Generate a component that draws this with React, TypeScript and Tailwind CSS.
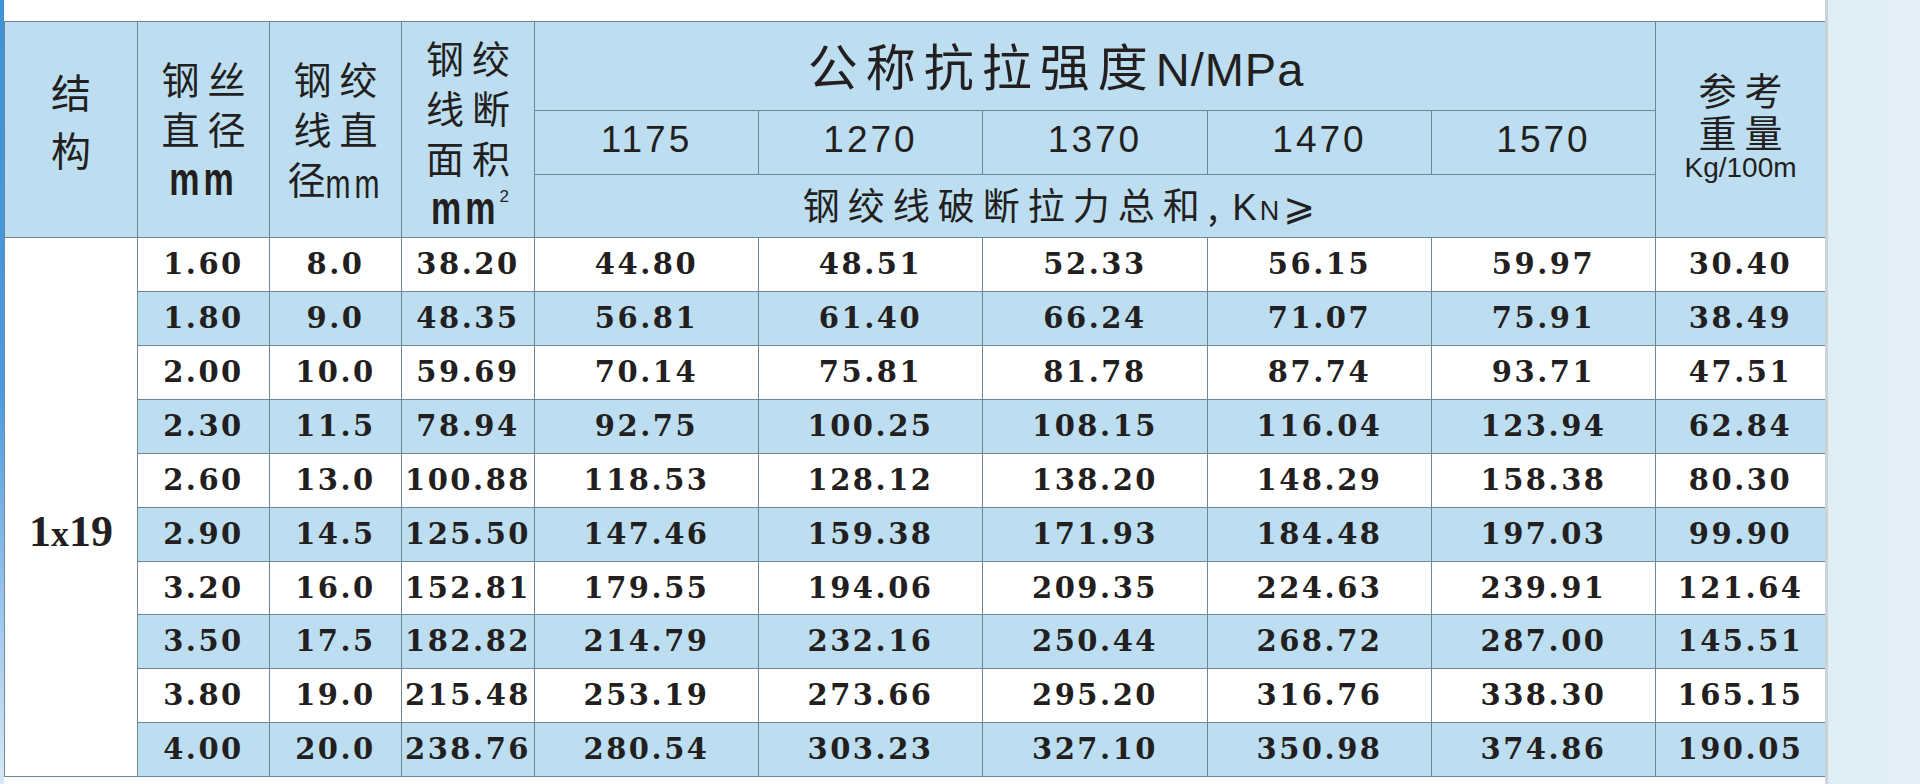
import React from "react";

const rows: string[][] = [
  ["1.60", "8.0", "38.20", "44.80", "48.51", "52.33", "56.15", "59.97", "30.40"],
  ["1.80", "9.0", "48.35", "56.81", "61.40", "66.24", "71.07", "75.91", "38.49"],
  ["2.00", "10.0", "59.69", "70.14", "75.81", "81.78", "87.74", "93.71", "47.51"],
  ["2.30", "11.5", "78.94", "92.75", "100.25", "108.15", "116.04", "123.94", "62.84"],
  ["2.60", "13.0", "100.88", "118.53", "128.12", "138.20", "148.29", "158.38", "80.30"],
  ["2.90", "14.5", "125.50", "147.46", "159.38", "171.93", "184.48", "197.03", "99.90"],
  ["3.20", "16.0", "152.81", "179.55", "194.06", "209.35", "224.63", "239.91", "121.64"],
  ["3.50", "17.5", "182.82", "214.79", "232.16", "250.44", "268.72", "287.00", "145.51"],
  ["3.80", "19.0", "215.48", "253.19", "273.66", "295.20", "316.76", "338.30", "165.15"],
  ["4.00", "20.0", "238.76", "280.54", "303.23", "327.10", "350.98", "374.86", "190.05"],
];

const rowHeights = [54, 54, 54, 54, 54, 54, 53, 54, 54, 54];

const cjk = "font-['Noto_Sans_CJK_SC',sans-serif]";
const sans = "font-['Liberation_Sans',Arial,sans-serif]";
const cell = "border border-[#6f8794] p-0";

function MM({ bold = true, sup = false, size = "text-[34px]" }: { bold?: boolean; sup?: boolean; size?: string }) {
  return (
    <span className="whitespace-nowrap inline-flex items-start justify-center">
      <span className={`${sans} ${bold ? "font-bold" : "font-normal"} ${size} inline-block scale-y-[1.35] leading-none tracking-[4px]`}>
        mm
      </span>
      {sup && (
        <span className={`${sans} text-[17px] font-normal leading-none tracking-normal inline-block -mt-[3px]`}>2</span>
      )}
    </span>
  );
}

export default function App() {
  return (
    <div className="w-[1920px] h-[784px] flex bg-white overflow-hidden text-[#231f20]">
      <div className="w-[4px] h-full bg-gradient-to-b from-[#3f92d8] via-[#4a9be0] to-[#d8e8f4]" />
      <div className="w-[1821px] pt-[21px] bg-white">
        <table className="table-fixed border-collapse w-[1821px]">
          <colgroup>
            <col className="w-[133px]" />
            <col className="w-[132px]" />
            <col className="w-[132px]" />
            <col className="w-[133px]" />
            <col className="w-[224px]" />
            <col className="w-[224px]" />
            <col className="w-[225px]" />
            <col className="w-[224px]" />
            <col className="w-[224px]" />
            <col className="w-[170px]" />
          </colgroup>
          <thead>
            <tr className="h-[89px]">
              <th rowSpan={3} className={`${cell} bg-[#bcdef0] align-top font-normal ${cjk}`}>
                <div className="pt-[40px] text-[40px] leading-[58px]">
                  <div>结</div>
                  <div>构</div>
                </div>
              </th>
              <th rowSpan={3} className={`${cell} bg-[#bcdef0] align-top font-normal ${cjk}`}>
                <div className="pt-[31px] text-[38px] leading-[50px]">
                  <div className="tracking-[8px] pl-[8px]">钢丝</div>
                  <div className="tracking-[8px] pl-[8px]">直径</div>
                  <div className="leading-[34px] pt-[5px]"><MM /></div>
                </div>
              </th>
              <th rowSpan={3} className={`${cell} bg-[#bcdef0] align-top font-normal ${cjk}`}>
                <div className="pt-[31px] text-[38px] leading-[50px]">
                  <div className="tracking-[8px] pl-[8px]">钢绞</div>
                  <div className="tracking-[8px] pl-[8px]">线直</div>
                  <div className="whitespace-nowrap">径<MM bold={false} size="text-[30px]" /></div>
                </div>
              </th>
              <th rowSpan={3} className={`${cell} bg-[#bcdef0] align-top font-normal ${cjk}`}>
                <div className="pt-[10px] text-[38px] leading-[50px]">
                  <div className="tracking-[8px] pl-[8px]">钢绞</div>
                  <div className="tracking-[8px] pl-[8px]">线断</div>
                  <div className="tracking-[8px] pl-[8px]">面积</div>
                  <div className="leading-[36px] pt-[4px] pl-[4px]"><MM sup /></div>
                </div>
              </th>
              <th colSpan={5} className={`${cell} bg-[#bcdef0] align-middle font-normal`}>
                <div className="pr-[78px] whitespace-nowrap">
                  <span className={`${cjk} text-[50px] tracking-[8px] leading-none`}>公称抗拉强度</span>
                  <span className={`${sans} text-[47px] tracking-[1px] leading-none`}>N/MPa</span>
                </div>
              </th>
              <th rowSpan={3} className={`${cell} bg-[#bcdef0] align-top font-normal ${cjk}`}>
                <div className="pt-[46px] text-[38px] leading-[42px]">
                  <div className="tracking-[8px] pl-[8px]">参考</div>
                  <div className="tracking-[8px] pl-[8px]">重量</div>
                  <div className={`${sans} text-[28px] leading-[32px]`}>Kg/100m</div>
                </div>
              </th>
            </tr>
            <tr className="h-[64px]">
              {["1175", "1270", "1370", "1470", "1570"].map((v) => (
                <th key={v} className={`${cell} bg-[#bcdef0] font-normal ${sans} text-[37px] tracking-[3px] leading-none`}>
                  <div className="pb-[6px]">{v}</div>
                </th>
              ))}
            </tr>
            <tr className="h-[63px]">
              <th colSpan={5} className={`${cell} bg-[#bcdef0] font-normal`}>
                <div className="pr-[72px] whitespace-nowrap leading-none">
                  <span className={`${cjk} text-[37px] tracking-[8px]`}>钢绞线破断拉力总和,</span>
                  <span className={`${sans} text-[37px] ml-[6px]`}>K</span>
                  <span className={`${sans} text-[27px] ml-[3px]`}>N</span>
                  <span className={`font-['DejaVu_Sans',sans-serif] text-[38px] ml-[4px]`}>⩾</span>
                </div>
              </th>
            </tr>
          </thead>
          <tbody>
            {rows.map((r, i) => (
              <tr key={i} style={{ height: rowHeights[i] }} className={i % 2 === 1 ? "bg-[#bcdef0]" : "bg-white"}>
                {i === 0 && (
                  <td rowSpan={10} className={`${cell} bg-white align-middle text-center`}>
                    <div className="pt-[50px] font-['Liberation_Serif','Times_New_Roman',serif] font-bold text-[44px] leading-none">
                      1<span className="text-[36px]">x</span>19
                    </div>
                  </td>
                )}
                {r.map((v, j) => (
                  <td
                    key={j}
                    className={`${cell} text-center align-middle whitespace-nowrap font-['DejaVu_Serif',serif] font-bold text-[29px] tracking-[2.5px] leading-none`}
                  >
                    {v}
                  </td>
                ))}
              </tr>
            ))}
          </tbody>
        </table>
      </div>
      <div className="flex-1 h-full border-l-[3px] border-[#c9d3d9] bg-gradient-to-r from-[#e0edf5] to-[#e4f0f6]" />
    </div>
  );
}
